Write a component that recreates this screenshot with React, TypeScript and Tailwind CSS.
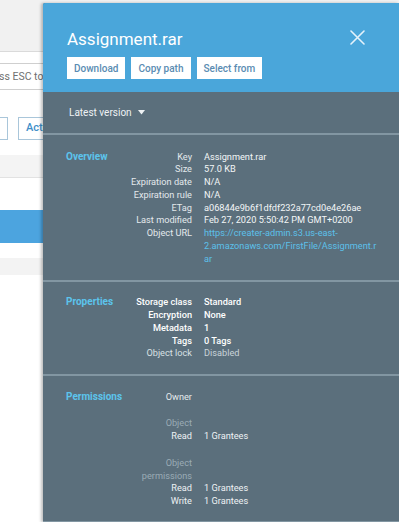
import React from "react";

const overview = [
  ["Key", "Assignment.rar"],
  ["Size", "57.0 KB"],
  ["Expiration date", "N/A"],
  ["Expiration rule", "N/A"],
  ["ETag", "a06844e9b6f1dfdf232a77cd0e4e26ae"],
  ["Last modified", "Feb 27, 2020 5:50:42 PM GMT+0200"],
];

const properties = [
  ["Storage class", "Standard", true],
  ["Encryption", "None", true],
  ["Metadata", "1", true],
  ["Tags", "0 Tags", true],
  ["Object lock", "Disabled", false],
] as const;

function Section({ title, children }: { title: string; children: React.ReactNode }) {
  return (
    <div className="flex pl-[23px] pr-[19px]">
      <div className="w-[64px] shrink-0 text-[10px] font-bold leading-[12.75px] text-[#5cc4ec]">{title}</div>
      <div className="grid flex-1 grid-cols-[62px_1fr] gap-x-[12px] text-[9.2px] leading-[12.75px]">{children}</div>
    </div>
  );
}

function Divider() {
  return <div className="h-[2px] bg-[#8296a2]" />;
}

export default function App() {
  return (
    <div className="relative h-[522px] w-[399px] overflow-hidden bg-white font-['Roboto',sans-serif]">
      {/* page behind the drawer */}
      <div className="flex flex-col">
        <div className="h-[52px] border-b border-[#dadada] bg-[#f1f1f1]" />
        <div className="mt-[11px] flex h-[27px] items-center border border-l-0 border-[#cfcfcf]">
          <span className="-ml-[1px] whitespace-nowrap text-[10.5px] text-[#707070]">ss ESC to filter</span>
        </div>
        <div className="mt-[27px] flex h-[23px]">
          <div className="w-[8px] border border-l-0 border-[#a9c6da]" />
          <div className="ml-[10px] flex flex-1 items-center border border-[#a9c6da] pl-[7px] text-[11px] font-medium text-[#3f8fc9]">
            Actions
          </div>
        </div>
        <div className="mt-[15px] h-[23px] border-b border-[#e2e2e2] bg-[#f4f4f4]" />
        <div className="h-[32px]" />
        <div className="h-[33px] bg-[#4ca4df]" />
        <div className="h-[15px]" />
        <div className="h-[17px] bg-[#f3f3f3]" />
      </div>

      {/* object drawer */}
      <div className="absolute bottom-0 left-[43px] right-0 top-[3px] overflow-hidden rounded-tl-[2px] bg-[#5b6f7c] shadow-[-2px_0_3px_rgba(0,0,0,0.25)]">
        <div className="h-[89px] bg-[#4aa6da] pl-[24px] pr-[34px] pt-[26px]">
          <div className="flex items-start justify-between">
            <div className="text-[17px] leading-[20px] text-white">Assignment.rar</div>
            <svg width="15" height="15" viewBox="0 0 15 15" className="mt-[1px]">
              <path d="M1 1 14 14M14 1 1 14" stroke="#e4f2fb" strokeWidth="1.6" strokeLinecap="round" />
            </svg>
          </div>
          <div className="mt-[8px] flex gap-[6px]">
            {["Download", "Copy path", "Select from"].map((b) => (
              <div key={b} className="flex h-[22px] items-center bg-white px-[7px] text-[10px] font-medium text-[#5a8cb2]">
                {b}
              </div>
            ))}
          </div>
        </div>

        <div className="flex h-[41px] items-center gap-[6px] pl-[26px] text-[10px] text-[#eef2f4]">
          Latest version
          <svg width="7" height="5" viewBox="0 0 7 5">
            <path d="M0 0h7L3.5 4.5z" fill="#eef2f4" />
          </svg>
        </div>
        <Divider />

        <div className="pb-[15px] pt-[15.5px]">
          <Section title="Overview">
            {overview.map(([k, v]) => (
              <React.Fragment key={k}>
                <div className="text-right text-[#e3e9ec]">{k}</div>
                <div className="whitespace-nowrap text-[#f3f6f7]">{v}</div>
              </React.Fragment>
            ))}
            <div className="text-right text-[#e3e9ec]">Object URL</div>
            <div className="whitespace-nowrap text-[#5cc0ea]">
              https://creater-admin.s3.us-east-
              <br />
              2.amazonaws.com/FirstFile/Assignment.r
              <br />
              ar
            </div>
          </Section>
        </div>
        <Divider />

        <div className="pb-[14px] pt-[14px]">
          <Section title="Properties">
            {properties.map(([k, v, strong]) => (
              <React.Fragment key={k}>
                <div className={strong ? "text-right font-medium text-white" : "text-right text-[#d8e0e4]"}>{k}</div>
                <div className={strong ? "font-medium text-white" : "text-[#c9d3d9]"}>{v}</div>
              </React.Fragment>
            ))}
          </Section>
        </div>
        <Divider />

        <div className="pb-[13px] pt-[14.5px]">
          <Section title="Permissions">
            <div className="text-right text-[#e3e9ec]">Owner</div>
            <div />
            <div className="mt-[14px] text-right text-[#9aabb5]">Object</div>
            <div className="mt-[14px]" />
            <div className="text-right text-[#eef2f4]">Read</div>
            <div className="text-[#eef2f4]">1 Grantees</div>
            <div className="mt-[14px] text-right text-[#9aabb5]">Object permissions</div>
            <div className="mt-[14px]" />
            <div className="text-right text-[#eef2f4]">Read</div>
            <div className="text-[#eef2f4]">1 Grantees</div>
            <div className="text-right text-[#eef2f4]">Write</div>
            <div className="text-[#eef2f4]">1 Grantees</div>
          </Section>
        </div>
        <Divider />
      </div>
    </div>
  );
}
